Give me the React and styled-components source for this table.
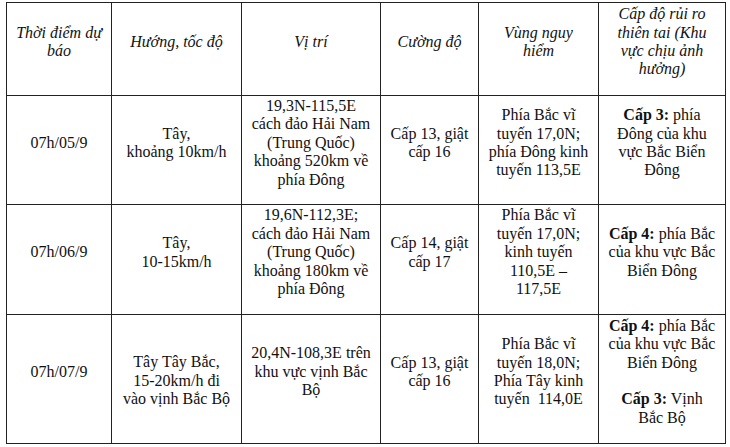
import React from "react";
import styled, { createGlobalStyle } from "styled-components";

const GlobalStyle = createGlobalStyle`
  html, body {
    margin: 0;
    padding: 0;
    background: #fff;
  }
  body {
    font-family: "Liberation Serif", "Times New Roman", serif;
    color: #111;
  }
`;

const Page = styled.div`
  padding: 2px 0 0 6px;
  width: 730px;
  height: 447px;
  box-sizing: border-box;
  overflow: hidden;
`;

const Table = styled.table`
  border-collapse: collapse;
  table-layout: fixed;
  width: 719px;
  font-size: 16px;
  line-height: 18.4px;
`;

const Row = styled.tr`
  height: ${(props) => props.h}px;
`;

const HeadCell = styled.th`
  border: 1px solid #222;
  font-weight: normal;
  font-style: italic;
  text-align: center;
  vertical-align: middle;
  padding: 0 4px 14px;
`;

const Cell = styled.td`
  border: 1px solid #222;
  text-align: center;
  vertical-align: middle;
  padding: 0 4px 14px;
  white-space: pre;
  padding-top: ${(props) => (props.lower ? "18px" : "0")};
`;

const Para = styled.div`
  & + & {
    margin-top: 18.4px;
  }
`;

const columns = [105, 130, 139, 98, 120, 127];

const headers = [
  "Thời điểm dự\nbáo",
  "Hướng, tốc độ",
  "Vị trí",
  "Cường độ",
  "Vùng nguy\nhiểm",
  "Cấp độ rủi ro\nthiên tai (Khu\nvực chịu ảnh\nhưởng)",
];

const rows = [
  {
    h: 109,
    time: "07h/05/9",
    dir: "Tây,\nkhoảng 10km/h",
    pos: "19,3N-115,5E\ncách đảo Hải Nam\n(Trung Quốc)\nkhoảng 520km về\nphía Đông",
    power: "Cấp 13, giật\ncấp 16",
    zone: "Phía Bắc vĩ\ntuyến 17,0N;\nphía Đông kinh\ntuyến 113,5E",
    risk: [{ level: "Cấp 3:", text: " phía\nĐông của khu\nvực Bắc Biển\nĐông" }],
  },
  {
    h: 110,
    time: "07h/06/9",
    dir: "Tây,\n10-15km/h",
    pos: "19,6N-112,3E;\ncách đảo Hải Nam\n(Trung Quốc)\nkhoảng 180km về\nphía Đông",
    power: "Cấp 14, giật\ncấp 17",
    zone: "Phía Bắc vĩ\ntuyến 17,0N;\nkinh tuyến\n110,5E –\n117,5E",
    risk: [{ level: "Cấp 4:", text: " phía Bắc\ncủa khu vực Bắc\nBiển Đông" }],
  },
  {
    h: 129,
    time: "07h/07/9",
    dir: "Tây Tây Bắc,\n15-20km/h đi\nvào vịnh Bắc Bộ",
    dirLower: true,
    pos: "20,4N-108,3E trên\nkhu vực vịnh Bắc\nBộ",
    power: "Cấp 13, giật\ncấp 16",
    zone: "Phía Bắc vĩ\ntuyến 18,0N;\nPhía Tây kinh\ntuyến  114,0E",
    risk: [
      { level: "Cấp 4:", text: " phía Bắc\ncủa khu vực Bắc\nBiển Đông" },
      { level: "Cấp 3:", text: " Vịnh\nBắc Bộ" },
    ],
  },
];

export default function App() {
  return (
    <Page>
      <GlobalStyle />
      <Table>
        <colgroup>
          {columns.map((w, i) => (
            <col key={i} style={{ width: w }} />
          ))}
        </colgroup>
        <thead>
          <Row h={93}>
            {headers.map((t) => (
              <HeadCell key={t} style={{ whiteSpace: "pre" }}>
                {t}
              </HeadCell>
            ))}
          </Row>
        </thead>
        <tbody>
          {rows.map((r) => (
            <Row key={r.time} h={r.h}>
              <Cell>{r.time}</Cell>
              <Cell lower={r.dirLower}>{r.dir}</Cell>
              <Cell>{r.pos}</Cell>
              <Cell>{r.power}</Cell>
              <Cell>{r.zone}</Cell>
              <Cell>
                {r.risk.map((p) => (
                  <Para key={p.level}>
                    <b>{p.level}</b>
                    {p.text}
                  </Para>
                ))}
              </Cell>
            </Row>
          ))}
        </tbody>
      </Table>
    </Page>
  );
}
